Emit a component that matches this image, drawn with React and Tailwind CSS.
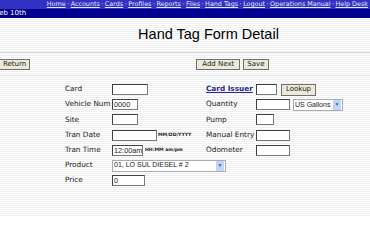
import React from 'react';

const navLinks = ['Home', 'Accounts', 'Cards', 'Profiles', 'Reports', 'Files', 'Hand Tags', 'Logout', 'Operations Manual', 'Help Desk'];

const Field = ({ w, value = '' }) => (
  <div
    className={`h-[11px] border border-[#7a7a7a] border-t-[#404040] border-l-[#404040] bg-white font-['Liberation_Sans',sans-serif] text-[7.3px] leading-[9px] pl-[1px] text-[#222] overflow-hidden whitespace-nowrap ${w}`}
  >
    {value}
  </div>
);

const Select = ({ w, value }) => (
  <div className={`h-[12px] flex items-center border border-[#a5acb2] bg-white font-['Liberation_Sans',sans-serif] text-[7px] text-[#222] ${w}`}>
    <span className="flex-1 pl-[1px] whitespace-nowrap overflow-hidden">{value}</span>
    <span className="w-[8px] h-[10px] mr-[1px] shrink-0 flex items-center justify-center rounded-[1px] bg-[#c3d3fd] text-[#4d6185] text-[5px]">▼</span>
  </div>
);

const Btn = ({ children, className = '' }) => (
  <button className={`h-[11px] px-[3px] border border-[#6f6f6f] bg-[#ece9d8] text-[7px] leading-[9px] text-[#222] ${className}`}>
    {children}
  </button>
);

const Label = ({ children }) => <span className="w-[47px] shrink-0 whitespace-nowrap text-[7.3px] text-[#222]">{children}</span>;
const RLabel = ({ children }) => <span className="w-[50px] shrink-0 whitespace-nowrap text-[7.3px] text-[#222]">{children}</span>;

export default function App() {
  return (
    <div className="w-[370px] h-[216px] overflow-hidden bg-white font-['DejaVu_Sans',sans-serif]">
      {/* nav bars */}
      <div className="h-[9px] bg-[#3232c2] flex items-center justify-end pr-[2px] text-[6.4px] leading-none text-[#e6e6ff] whitespace-nowrap">
        {navLinks.map((l, i) => (
          <span key={l}>
            <span className="underline">{l}</span>
            {i < navLinks.length - 1 && <span className="px-[1.5px]">·</span>}
          </span>
        ))}
      </div>
      <div className="h-[9px] bg-[#00008e] flex items-center text-[7px] leading-none text-white overflow-hidden">
        <span className="-ml-[4.5px]">Feb 10th</span>
      </div>

      <div className="bg-[image:repeating-linear-gradient(#ffffff_0px,#ffffff_1px,#efefef_1px,#efefef_2px)] h-[198px]">
        {/* title */}
        <div className="h-[35px] flex items-center justify-center pl-[47px] border-b border-[#dadada]">
          <h1 className="font-['Liberation_Sans',sans-serif] text-[14.5px] text-black">Hand Tag Form Detail</h1>
        </div>

        {/* buttons */}
        <div className="h-[23px] flex items-center border-b border-[#e2e2e2]">
          <Btn className="-ml-[1px]">Return</Btn>
          <div className="ml-[166px] flex gap-[3px]">
            <Btn className="px-[5px]">Add Next</Btn>
            <Btn>Save</Btn>
          </div>
        </div>

        {/* form */}
        <div className="pt-[6px] pl-[65px]">
          <div className="h-[15.2px] flex items-center">
            <Label>Card</Label>
            <Field w="w-[36px]" />
            <span className="w-[58px]" />
            <span className="w-[50px] shrink-0 text-[7.3px] font-bold underline text-[#2a2a8a] whitespace-nowrap">Card Issuer</span>
            <Field w="w-[21px]" />
            <Btn className="ml-[4px] h-[12px] px-[4px]">Lookup</Btn>
          </div>
          <div className="h-[15.2px] flex items-center">
            <Label>Vehicle Num</Label>
            <Field w="w-[26px]" value="0000" />
            <span className="w-[68px]" />
            <RLabel>Quantity</RLabel>
            <Field w="w-[34px]" />
            <Select w="w-[50px] ml-[3px]" value="US Gallons" />
          </div>
          <div className="h-[15.2px] flex items-center">
            <Label>Site</Label>
            <Field w="w-[26px]" />
            <span className="w-[68px]" />
            <RLabel>Pump</RLabel>
            <Field w="w-[18px]" />
          </div>
          <div className="h-[15.2px] flex items-center">
            <Label>Tran Date</Label>
            <Field w="w-[45px]" />
            <span className="w-[49px] pl-[1px] text-[4.6px] font-bold text-[#222] whitespace-nowrap">MM/DD/YYYY</span>
            <RLabel>Manual Entry</RLabel>
            <Field w="w-[34px]" />
          </div>
          <div className="h-[15.2px] flex items-center">
            <Label>Tran Time</Label>
            <Field w="w-[31px]" value="12:00am" />
            <span className="w-[63px] pl-[2px] text-[4.6px] font-bold text-[#222] whitespace-nowrap">HH:MM am/pm</span>
            <RLabel>Odometer</RLabel>
            <Field w="w-[34px]" />
          </div>
          <div className="h-[15.2px] flex items-center">
            <Label>Product</Label>
            <Select w="w-[114px]" value="01, LO SUL DIESEL # 2" />
          </div>
          <div className="h-[15.2px] flex items-center">
            <Label>Price</Label>
            <Field w="w-[33px]" value="0" />
          </div>
        </div>
      </div>
    </div>
  );
}
